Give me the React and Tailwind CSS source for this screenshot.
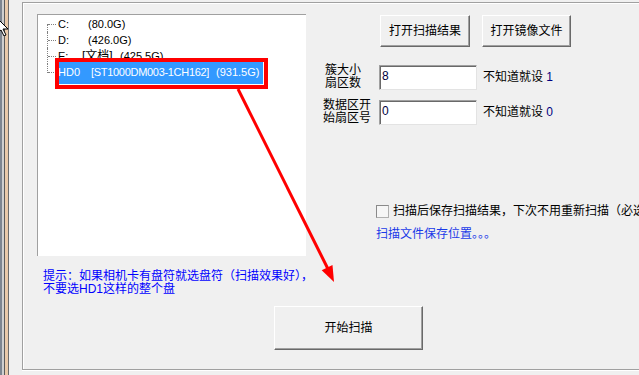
import React from "react";

const TreeRow = ({ first, last, selected, children }) => (
  <div className="flex h-[16px] items-center">
    {/* dotted connector */}
    <div className="relative h-[16px] w-[19px] flex-none">
      <div
        className={`absolute left-[9px] w-0 border-l border-dotted border-[#808080] ${
          first ? "top-[8px] bottom-0" : last ? "top-0 h-[9px]" : "top-0 bottom-0"
        }`}
      />
      <div className="absolute left-[10px] top-[8px] w-[8px] border-t border-dotted border-[#808080]" />
    </div>
    {selected ? (
      <div className="flex h-[23px] w-[206px] flex-none items-center bg-[#3399ff] pl-[1px] text-white">
        {children}
      </div>
    ) : (
      <div className="flex items-center pl-[1px]">{children}</div>
    )}
  </div>
);

const WinButton = ({ className, children }) => (
  <button
    className={`flex items-center justify-center border border-t-white border-l-white border-r-[#696969] border-b-[#696969] bg-[#f0f0f0] text-[12px] text-black shadow-[inset_-1px_-1px_0_#a0a0a0] ${className}`}
  >
    {children}
  </button>
);

const Field = ({ label, value, note, labelPad }) => (
  <div className="flex items-center">
    <div className={`w-[56px] flex-none text-[12px] leading-[13px] ${labelPad}`}>{label}</div>
    <div className="h-[25px] w-[98px] flex-none border border-t-[#a0a0a0] border-l-[#a0a0a0] border-r-[#e3e3e3] border-b-[#e3e3e3] bg-white pl-[2px] pt-[3px] text-[12px] leading-[14px] text-[#000040] shadow-[inset_1px_1px_0_#696969]">
      {value}
    </div>
    <div className="ml-[6px] whitespace-nowrap text-[12px]">
      不知道就设 <span className="text-[#000080]">{note}</span>
    </div>
  </div>
);

const App = () => {
  return (
    <div className="relative flex h-[375px] w-[639px] overflow-hidden bg-[#f0f0f0] font-['Liberation_Sans','Noto_Sans_CJK_SC',sans-serif] text-black">
      {/* edge of the window behind */}
      <div className="flex h-full flex-none">
        <div className="w-[2px] bg-[#7d8590]" />
        <div className="w-[2px] bg-[#cfcfcf]" />
        <div className="w-[1px] bg-[#5a5a5a]" />
        <div className="w-[3px] bg-[#e9c9a9]" />
        <div className="w-[1px] bg-[#6b6b6b]" />
      </div>

      <div className="ml-[13px] flex-none pt-[2px]">
        {/* group box */}
        <div className="h-[368px] w-[640px] border-l border-t border-b border-[#a0a0a0] shadow-[inset_1px_1px_0_#ffffff,0_1px_0_#ffffff]">
          <div className="flex items-start pl-[14px] pt-[11px]">
            {/* left column */}
            <div className="w-[269px] flex-none">
              <div className="h-[242px] border-l border-t border-[#a0a0a0] bg-white pt-[1px] text-[11px]">
                <TreeRow first>
                  <span className="w-[30px] flex-none">C:</span>
                  <span>(80.0G)</span>
                </TreeRow>
                <TreeRow>
                  <span className="w-[30px] flex-none">D:</span>
                  <span>(426.0G)</span>
                </TreeRow>
                <TreeRow>
                  <span className="w-[24px] flex-none">E:</span>
                  <span className="w-[38px] flex-none text-[12px]">[文档]</span>
                  <span>(425.5G)</span>
                </TreeRow>
                <TreeRow last selected>
                  <span className="w-[33px] flex-none">HD0</span>
                  <span className="w-[125px] flex-none overflow-visible whitespace-nowrap tracking-[-0.3px]">
                    [ST1000DM003-1CH162]
                  </span>
                  <span className="flex-none whitespace-nowrap">(931.5G)</span>
                </TreeRow>
              </div>
              <div className="mt-[14px] whitespace-nowrap pl-[6px] text-[12px] leading-[13px] text-[#0000ff]">
                提示：如果相机卡有盘符就选盘符（扫描效果好），
                <br />
                不要选HD1这样的整个盘
              </div>
            </div>

            {/* right column */}
            <div className="ml-[17px] flex-none">
              <div className="mt-[1px] flex gap-[12px] pl-[57px]">
                <WinButton className="h-[32px] w-[90px]">打开扫描结果</WinButton>
                <WinButton className="h-[32px] w-[89px]">打开镜像文件</WinButton>
              </div>
              <div className="mt-[17px]">
                <Field label={<>簇大小<br />扇区数</>} value="8" note="1" labelPad="pl-[2px]" />
              </div>
              <div className="mt-[9px]">
                <Field label={<>数据区开<br />始扇区号</>} value="0" note="0" labelPad="" />
              </div>
              <div className="ml-[53px] mt-[78px] flex h-[16px] items-center gap-[4px] whitespace-nowrap text-[12px]">
                <div className="h-[13px] w-[13px] flex-none border border-t-[#8a8a8a] border-l-[#8a8a8a] border-r-[#b0b0b0] border-b-[#b0b0b0] bg-[#f6f6f6]" />
                <span>扫描后保存扫描结果，下次不用重新扫描（必选）</span>
              </div>
              <div className="ml-[53px] mt-[7px] h-[16px] whitespace-nowrap text-[12px] leading-[16px] text-[#1a3ae8]">
                扫描文件保存位置。。。
              </div>
            </div>
          </div>

          <div className="mt-[10px] pl-[251px]">
            <WinButton className="h-[44px] w-[149px]">开始扫描</WinButton>
          </div>
        </div>
      </div>

      {/* annotation: red box and arrow */}
      <svg className="pointer-events-none absolute left-0 top-0" width="639" height="375" viewBox="0 0 639 375">
        <rect x="57" y="60" width="209" height="27" fill="none" stroke="#ff0000" strokeWidth="4" />
        <line x1="238" y1="89" x2="328" y2="269" stroke="#ff0000" strokeWidth="3" />
        <polygon points="334,282 332.5,265 321.7,270.2" fill="#ff0000" />
      </svg>

      {/* mouse cursor at the edge */}
      <svg className="pointer-events-none absolute left-0 top-[18px]" width="10" height="18" viewBox="0 0 10 18">
        <polygon points="-3,0 8,11 3,11 6,17 4,18 1,12 -3,15" fill="#ffffff" stroke="#000000" strokeWidth="1" />
      </svg>
    </div>
  );
};

export default App;
